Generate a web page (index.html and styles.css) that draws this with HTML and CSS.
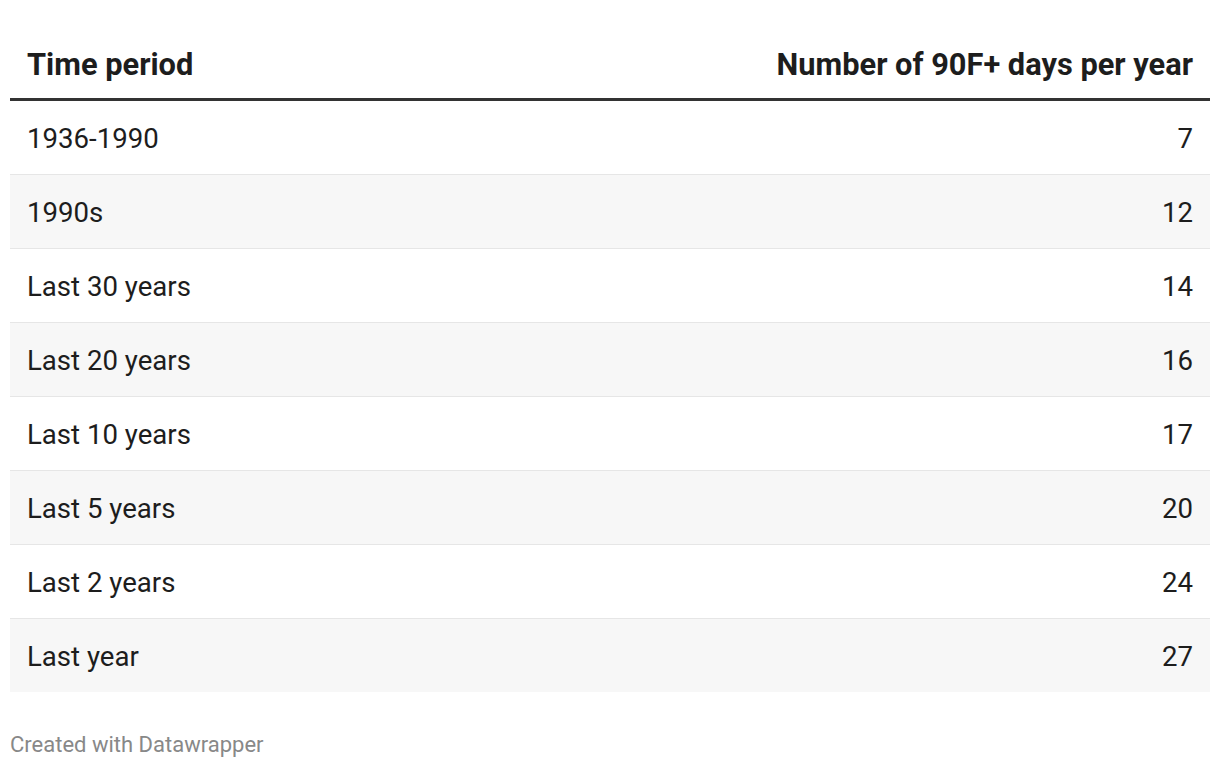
FILE: index.html
```html
<!DOCTYPE html>
<html lang="en">
<head>
<meta charset="utf-8">
<title>Number of 90F+ days per year</title>
<link rel="stylesheet" href="styles.css">
</head>
<body>
<div class="chart">
  <table class="dw-table">
    <thead>
      <tr>
        <th class="col-left">Time period</th>
        <th class="col-right">Number of 90F+ days per year</th>
      </tr>
    </thead>
    <tbody>
      <tr><td class="col-left">1936-1990</td><td class="col-right">7</td></tr>
      <tr><td class="col-left">1990s</td><td class="col-right">12</td></tr>
      <tr><td class="col-left">Last 30 years</td><td class="col-right">14</td></tr>
      <tr><td class="col-left">Last 20 years</td><td class="col-right">16</td></tr>
      <tr><td class="col-left">Last 10 years</td><td class="col-right">17</td></tr>
      <tr><td class="col-left">Last 5 years</td><td class="col-right">20</td></tr>
      <tr><td class="col-left">Last 2 years</td><td class="col-right">24</td></tr>
      <tr><td class="col-left">Last year</td><td class="col-right">27</td></tr>
    </tbody>
  </table>
  <div class="footer">Created with Datawrapper</div>
</div>
</body>
</html>
```

FILE: styles.css
```css
html, body {
  margin: 0;
  padding: 0;
  background: #ffffff;
}

body {
  font-family: Roboto, "Liberation Sans", Arial, sans-serif;
  color: #1d1d1d;
}

.chart {
  padding: 30px 10px 0 10px;
}

.dw-table {
  width: 100%;
  border-collapse: collapse;
  font-size: 27.6px;
  line-height: 33px;
}

.dw-table th {
  font-size: 30.8px;
  font-weight: 700;
  padding: 18px 17px 17px 17px;
  border-bottom: 3px solid #333333;
  color: #1d1d1d;
}

.dw-table td {
  height: 33px;
  padding: 21px 17px 19px 17px;
  font-weight: 400;
  color: #1d1d1d;
}

.dw-table tbody tr + tr td {
  border-top: 1px solid #e6e6e6;
}

.dw-table tbody tr:nth-child(even) td {
  background: #f7f7f7;
}

.col-left {
  text-align: left;
}

.col-right {
  text-align: right;
}

.footer {
  margin-top: 39px;
  font-size: 22px;
  line-height: 27px;
  color: #888888;
}
```
